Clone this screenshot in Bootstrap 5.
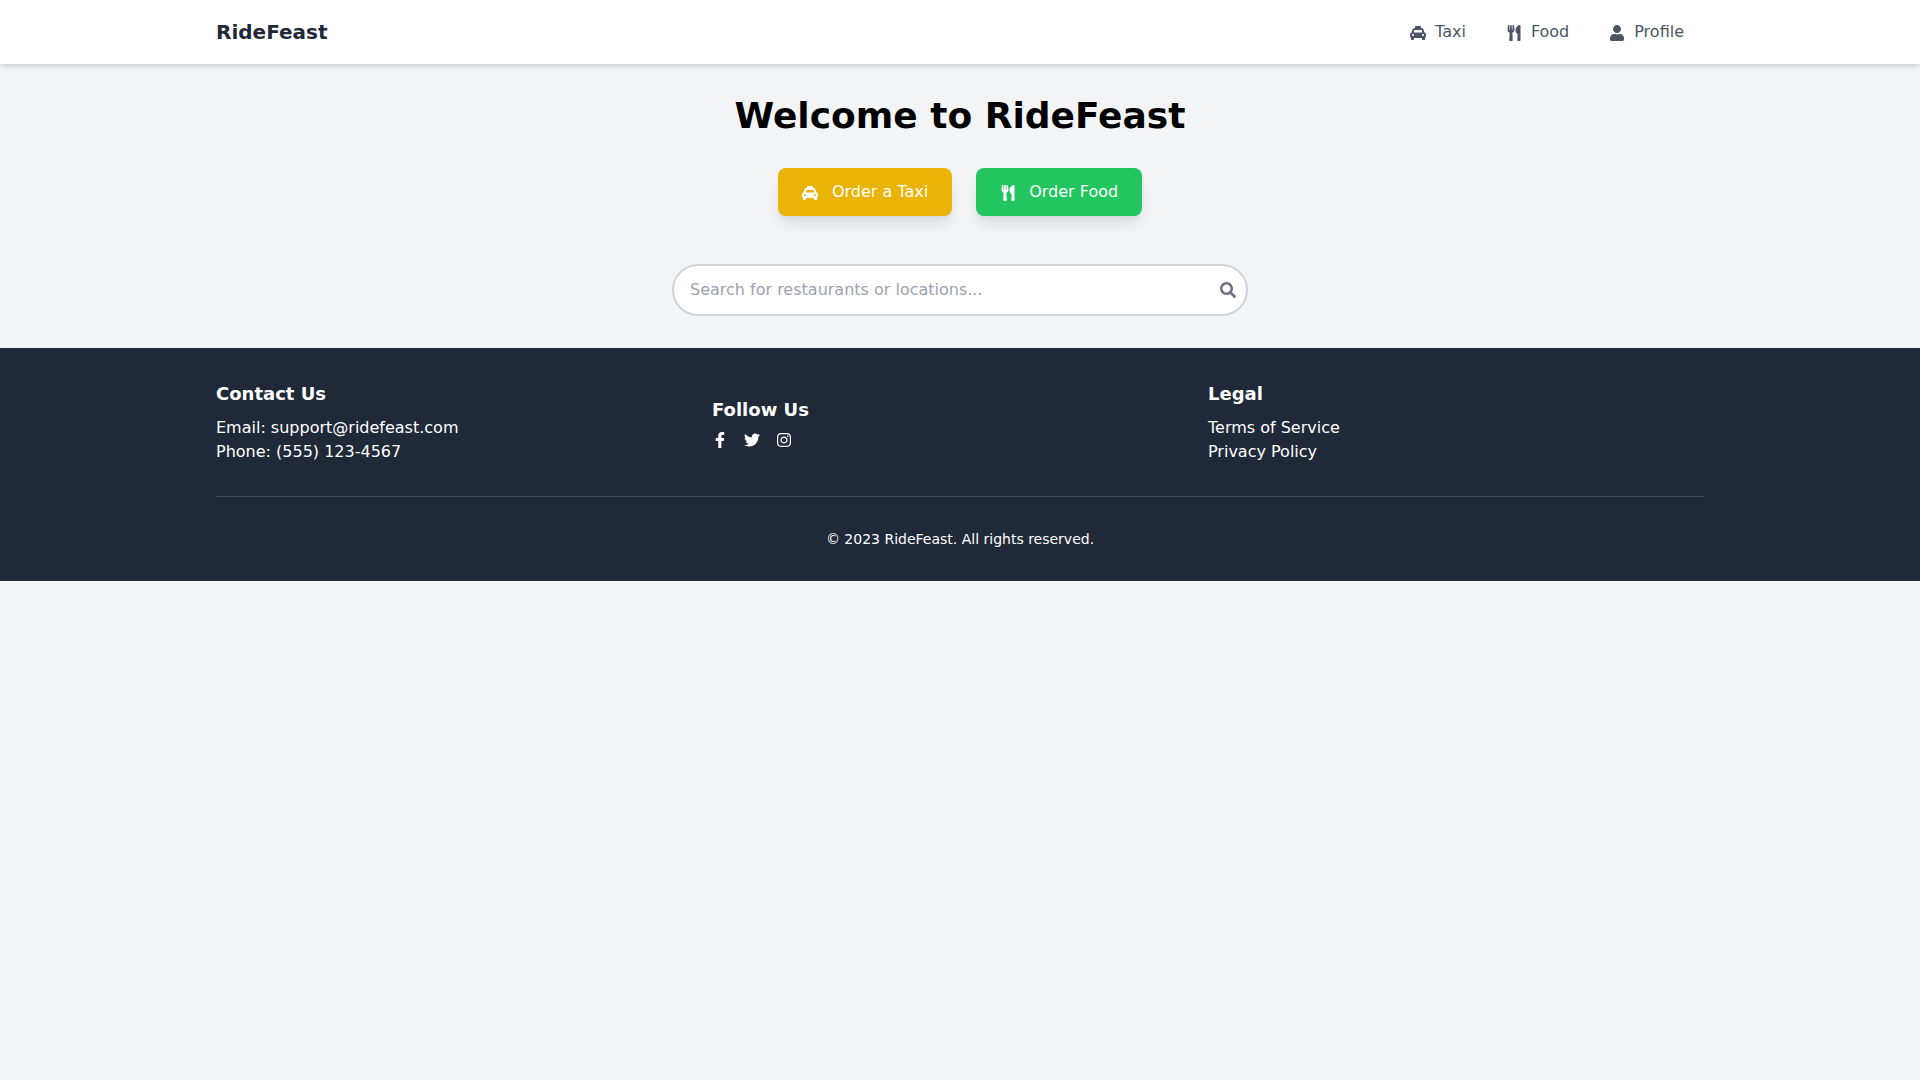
<!DOCTYPE html>
<html lang="en">
<head>
  <meta charset="UTF-8" />
  <meta name="viewport" content="width=device-width, initial-scale=1.0"/>
  <title>RideFeast</title>
  <link href="https://cdn.jsdelivr.net/npm/bootstrap@5.3.3/dist/css/bootstrap.min.css" rel="stylesheet">
  <style>
    body {
      background: #f3f4f6;
      font-family: "DejaVu Sans", sans-serif;
      font-size: 16px;
      line-height: 24px;
      color: #1f2937;
    }
    .page-wrap {
      max-width: 1536px;
      margin: 0 auto;
      padding: 0 24px;
    }
    .top-bar {
      height: 64px;
      padding: 0;
      background: #fff;
      box-shadow: 0 4px 6px -1px rgba(0,0,0,.1), 0 2px 4px -1px rgba(0,0,0,.06);
    }
    .top-bar .page-wrap { width: 100%; }
    .brand-name {
      font-size: 20px;
      line-height: 28px;
      font-weight: 700;
      color: #1f2937;
      padding: 0;
      margin: 0;
    }
    .top-link {
      color: #4b5563;
      padding: 0 21px 0 20px;
      text-decoration: none;
    }
    .top-link:last-child { padding-right: 20px; }
    .ico { fill: currentColor; height: 16px; margin-top: 2px; display: inline-block; flex: none; }
    .ico-taxi { width: 16px; }
    .ico-food { width: 14px; }
    .ico-user { width: 14px; }
    .top-link .ico-taxi { margin-right: 9px; }
    .top-link .ico-food { margin-right: 10px; }
    .top-link .ico-user { margin-right: 10px; }
    .hero { padding: 32px 0; }
    .hero h1 {
      font-size: 36px;
      line-height: 40px;
      font-weight: 700;
      color: #000;
      margin: 0 0 32px;
    }
    .order-btn {
      height: 48px;
      padding: 0 24px;
      border: 0;
      border-radius: 8px;
      color: #fff;
      font-size: 16px;
      box-shadow: 0 10px 15px -3px rgba(0,0,0,.1), 0 4px 6px -2px rgba(0,0,0,.05);
    }
    .order-btn:hover { color: #fff; }
    .order-btn .ico-taxi { margin-right: 14px; }
    .order-btn .ico-food { width: 16px; margin-right: 13px; }
    .btn-taxi, .btn-taxi:hover { background: #eab308; }
    .btn-food, .btn-food:hover { background: #22c55e; }
    .search-wrap { width: 576px; margin: 48px auto 0; }
    .search-input {
      height: 52px;
      padding: 11px 16px 13px;
      border: 2px solid #d1d5db;
      border-radius: 9999px;
      font-size: 16px;
      line-height: 24px;
      color: #1f2937;
    }
    .search-input::placeholder { color: #9ca3af; opacity: 1; }
    .search-ico {
      position: absolute;
      right: 12px;
      top: 18px;
      width: 16px;
      height: 16px;
      fill: #6b7280;
    }
    .site-foot { background: #1f2937; color: #fff; padding: 32px 0; }
    .site-foot h3 {
      font-size: 18px;
      line-height: 28px;
      font-weight: 700;
      margin: 0 0 8px;
    }
    .foot-link { color: #fff; text-decoration: none; display: block; }
    .social-list { height: 16px; gap: 16px; }
    .social-box { width: 16px; height: 16px; color: #fff; }
    .social-box svg { height: 16px; fill: currentColor; }
    .foot-rule { margin-top: 32px; padding-top: 32px; border-top: 1px solid #414b5c; font-size: 14px; line-height: 20px; }
  </style>
</head>
<body>

<nav class="navbar top-bar">
  <div class="page-wrap d-flex justify-content-between align-items-center">
    <a class="navbar-brand brand-name" href="#">RideFeast</a>
    <div class="d-flex align-items-center">
      <a class="top-link d-flex align-items-center" href="#">
        <svg class="ico ico-taxi" viewBox="0 0 512 512"><path d="M462 241.64l-22-84.84c-9.6-35.2-41.6-60.8-76.8-60.8H352V64c0-17.67-14.33-32-32-32H192c-17.67 0-32 14.33-32 32v32h-11.2c-35.2 0-67.2 25.6-76.8 60.8l-22 84.84C21.41 248.04 0 273.47 0 304v48c0 23.63 12.95 44.04 32 55.12V448c0 17.67 14.33 32 32 32h32c17.67 0 32-14.33 32-32v-32h256v32c0 17.67 14.33 32 32 32h32c17.67 0 32-14.33 32-32v-40.88c19.05-11.09 32-31.49 32-55.12v-48c0-30.53-21.41-55.96-50-62.36zM96 352c-17.67 0-32-14.33-32-32s14.33-32 32-32 32 14.33 32 32-14.33 32-32 32zm20.55-112l17.2-66.36c2.23-8.15 9.59-13.64 15.05-13.64h214.4c5.46 0 12.82 5.49 14.39 11.06L394.55 240H116.55zM416 352c-17.67 0-32-14.33-32-32s14.33-32 32-32 32 14.33 32 32-14.33 32-32 32z"/></svg>
        Taxi
      </a>
      <a class="top-link d-flex align-items-center" href="#">
        <svg class="ico ico-food" viewBox="0 0 416 512"><path d="M207.9 15.2c.8 4.7 16.1 94.5 16.1 128.8 0 52.3-27.8 89.6-68.9 104.6L168 486.7c.7 13.7-10.2 25.3-24 25.3H80c-13.7 0-24.7-11.5-24-25.3l12.9-238.1C27.7 233.6 0 196.2 0 144 0 109.6 15.3 19.9 16.1 15.2 19.3-5.1 61.4-5.4 64 16.3v141.2c1.3 3.4 15.1 3.2 16 0 1.4-25.3 7.9-139.2 8-141.8 3.3-20.8 44.7-20.8 47.9 0 .2 2.7 6.6 116.5 8 141.8.9 3.2 14.8 3.4 16 0V16.3c2.6-21.6 44.8-21.4 48-1.1zm119.2 285.7l-15 185.1c-1.2 14 9.9 26 23.9 26h56c13.3 0 24-10.7 24-24V24c0-13.2-10.7-24-24-24-82.5 0-221.4 178.5-64.9 300.9z"/></svg>
        Food
      </a>
      <a class="top-link d-flex align-items-center" href="#">
        <svg class="ico ico-user" viewBox="0 0 448 512"><path d="M224 256c70.7 0 128-57.3 128-128S294.7 0 224 0 96 57.3 96 128s57.3 128 128 128zm89.6 32h-16.7c-22.2 10.2-46.9 16-72.9 16s-50.6-5.8-72.9-16h-16.7C60.2 288 0 348.2 0 422.4V464c0 26.5 21.5 48 48 48h352c26.5 0 48-21.5 48-48v-41.6c0-74.2-60.2-134.4-134.4-134.4z"/></svg>
        Profile
      </a>
    </div>
  </div>
</nav>

<main class="hero text-center">
  <div class="page-wrap">
    <h1>Welcome to RideFeast</h1>
    <div class="d-flex justify-content-center gap-4">
      <a class="btn order-btn btn-taxi d-flex align-items-center" href="#">
        <svg class="ico ico-taxi" viewBox="0 0 512 512"><path d="M462 241.64l-22-84.84c-9.6-35.2-41.6-60.8-76.8-60.8H352V64c0-17.67-14.33-32-32-32H192c-17.67 0-32 14.33-32 32v32h-11.2c-35.2 0-67.2 25.6-76.8 60.8l-22 84.84C21.41 248.04 0 273.47 0 304v48c0 23.63 12.95 44.04 32 55.12V448c0 17.67 14.33 32 32 32h32c17.67 0 32-14.33 32-32v-32h256v32c0 17.67 14.33 32 32 32h32c17.67 0 32-14.33 32-32v-40.88c19.05-11.09 32-31.49 32-55.12v-48c0-30.53-21.41-55.96-50-62.36zM96 352c-17.67 0-32-14.33-32-32s14.33-32 32-32 32 14.33 32 32-14.33 32-32 32zm20.55-112l17.2-66.36c2.23-8.15 9.59-13.64 15.05-13.64h214.4c5.46 0 12.82 5.49 14.39 11.06L394.55 240H116.55zM416 352c-17.67 0-32-14.33-32-32s14.33-32 32-32 32 14.33 32 32-14.33 32-32 32z"/></svg>
        Order a Taxi
      </a>
      <a class="btn order-btn btn-food d-flex align-items-center" href="#">
        <svg class="ico ico-food" viewBox="0 0 416 512"><path d="M207.9 15.2c.8 4.7 16.1 94.5 16.1 128.8 0 52.3-27.8 89.6-68.9 104.6L168 486.7c.7 13.7-10.2 25.3-24 25.3H80c-13.7 0-24.7-11.5-24-25.3l12.9-238.1C27.7 233.6 0 196.2 0 144 0 109.6 15.3 19.9 16.1 15.2 19.3-5.1 61.4-5.4 64 16.3v141.2c1.3 3.4 15.1 3.2 16 0 1.4-25.3 7.9-139.2 8-141.8 3.3-20.8 44.7-20.8 47.9 0 .2 2.7 6.6 116.5 8 141.8.9 3.2 14.8 3.4 16 0V16.3c2.6-21.6 44.8-21.4 48-1.1zm119.2 285.7l-15 185.1c-1.2 14 9.9 26 23.9 26h56c13.3 0 24-10.7 24-24V24c0-13.2-10.7-24-24-24-82.5 0-221.4 178.5-64.9 300.9z"/></svg>
        Order Food
      </a>
    </div>
    <div class="search-wrap position-relative">
      <input type="text" class="form-control search-input" placeholder="Search for restaurants or locations...">
      <svg class="search-ico" viewBox="0 0 512 512"><path d="M505 442.7L405.3 343c-4.5-4.5-10.6-7-17-7H372c27.6-35.3 44-79.7 44-128C416 93.1 322.9 0 208 0S0 93.1 0 208s93.1 208 208 208c48.3 0 92.7-16.4 128-44v16.3c0 6.4 2.5 12.5 7 17l99.7 99.7c9.4 9.4 24.6 9.4 33.9 0l28.3-28.3c9.4-9.4 9.4-24.6.1-34zM208 336c-70.7 0-128-57.2-128-128 0-70.7 57.2-128 128-128 70.7 0 128 57.2 128 128 0 70.7-57.2 128-128 128z"/></svg>
    </div>
  </div>
</main>

<footer class="site-foot">
  <div class="page-wrap">
    <div class="row g-0 align-items-center">
      <div class="col-4">
        <h3>Contact Us</h3>
        <div>Email: support@ridefeast.com</div>
        <div>Phone: (555) 123-4567</div>
      </div>
      <div class="col-4">
        <h3>Follow Us</h3>
        <div class="d-flex social-list">
          <a class="social-box d-flex justify-content-center align-items-center" href="#"><svg viewBox="0 0 320 512"><path d="M279.14 288l14.22-92.66h-88.91v-60.13c0-25.35 12.42-50.06 52.24-50.06h40.42V6.26S260.43 0 225.36 0c-73.22 0-121.08 44.38-121.08 124.72v70.62H22.89V288h81.39v224h100.17V288z"/></svg></a>
          <a class="social-box d-flex justify-content-center align-items-center" href="#"><svg viewBox="0 0 512 512"><path d="M459.37 151.716c.325 4.548.325 9.097.325 13.645 0 138.72-105.583 298.558-298.558 298.558-59.452 0-114.68-17.219-161.137-47.106 8.447.974 16.568 1.299 25.34 1.299 49.055 0 94.213-16.568 130.274-44.832-46.132-.975-84.792-31.188-98.112-72.772 6.498.974 12.995 1.624 19.818 1.624 9.421 0 18.843-1.3 27.614-3.573-48.081-9.747-84.143-51.98-84.143-102.985v-1.299c13.969 7.797 30.214 12.67 47.431 13.319-28.264-18.843-46.781-51.005-46.781-87.391 0-19.492 5.197-37.36 14.294-52.954 51.655 63.675 129.3 105.258 216.365 109.807-1.624-7.797-2.599-15.918-2.599-24.04 0-57.828 46.782-104.934 104.934-104.934 30.213 0 57.502 12.67 76.67 33.137 23.715-4.548 46.456-13.32 66.599-25.34-7.798 24.366-24.366 44.833-46.132 57.827 21.117-2.273 41.584-8.122 60.426-16.243-14.292 20.791-32.161 39.308-52.628 54.253z"/></svg></a>
          <a class="social-box d-flex justify-content-center align-items-center" href="#"><svg viewBox="0 0 448 512"><path d="M224.1 141c-63.6 0-114.9 51.3-114.9 114.9s51.3 114.9 114.9 114.9S339 319.5 339 255.9 287.7 141 224.1 141zm0 189.6c-41.1 0-74.7-33.5-74.7-74.7s33.5-74.7 74.7-74.7 74.7 33.5 74.7 74.7-33.6 74.7-74.7 74.7zm146.4-194.3c0 14.9-12 26.8-26.8 26.8-14.9 0-26.8-12-26.8-26.8s12-26.8 26.8-26.8 26.8 12 26.8 26.8zm76.1 27.2c-1.7-35.9-9.9-67.7-36.2-93.9-26.2-26.2-58-34.4-93.9-36.2-37-2.1-147.9-2.1-184.9 0-35.8 1.7-67.6 9.9-93.9 36.1s-34.4 58-36.2 93.9c-2.1 37-2.1 147.9 0 184.9 1.7 35.9 9.9 67.7 36.2 93.9s58 34.4 93.9 36.2c37 2.1 147.9 2.1 184.9 0 35.9-1.7 67.7-9.9 93.9-36.2 26.2-26.2 34.4-58 36.2-93.9 2.1-37 2.1-147.8 0-184.8zM398.8 388c-7.8 19.6-22.9 34.7-42.6 42.6-29.5 11.7-99.5 9-132.1 9s-102.7 2.6-132.1-9c-19.6-7.8-34.7-22.9-42.6-42.6-11.7-29.5-9-99.5-9-132.1s-2.6-102.7 9-132.1c7.8-19.6 22.9-34.7 42.6-42.6 29.5-11.7 99.5-9 132.1-9s102.7-2.6 132.1 9c19.6 7.8 34.7 22.9 42.6 42.6 11.7 29.5 9 99.5 9 132.1s2.7 102.7-9 132.1z"/></svg></a>
        </div>
      </div>
      <div class="col-4">
        <h3>Legal</h3>
        <a class="foot-link" href="#">Terms of Service</a>
        <a class="foot-link" href="#">Privacy Policy</a>
      </div>
    </div>
    <div class="foot-rule text-center">© 2023 RideFeast. All rights reserved.</div>
  </div>
</footer>

<script src="https://cdn.jsdelivr.net/npm/bootstrap@5.3.3/dist/js/bootstrap.bundle.min.js"></script>
</body>
</html>
